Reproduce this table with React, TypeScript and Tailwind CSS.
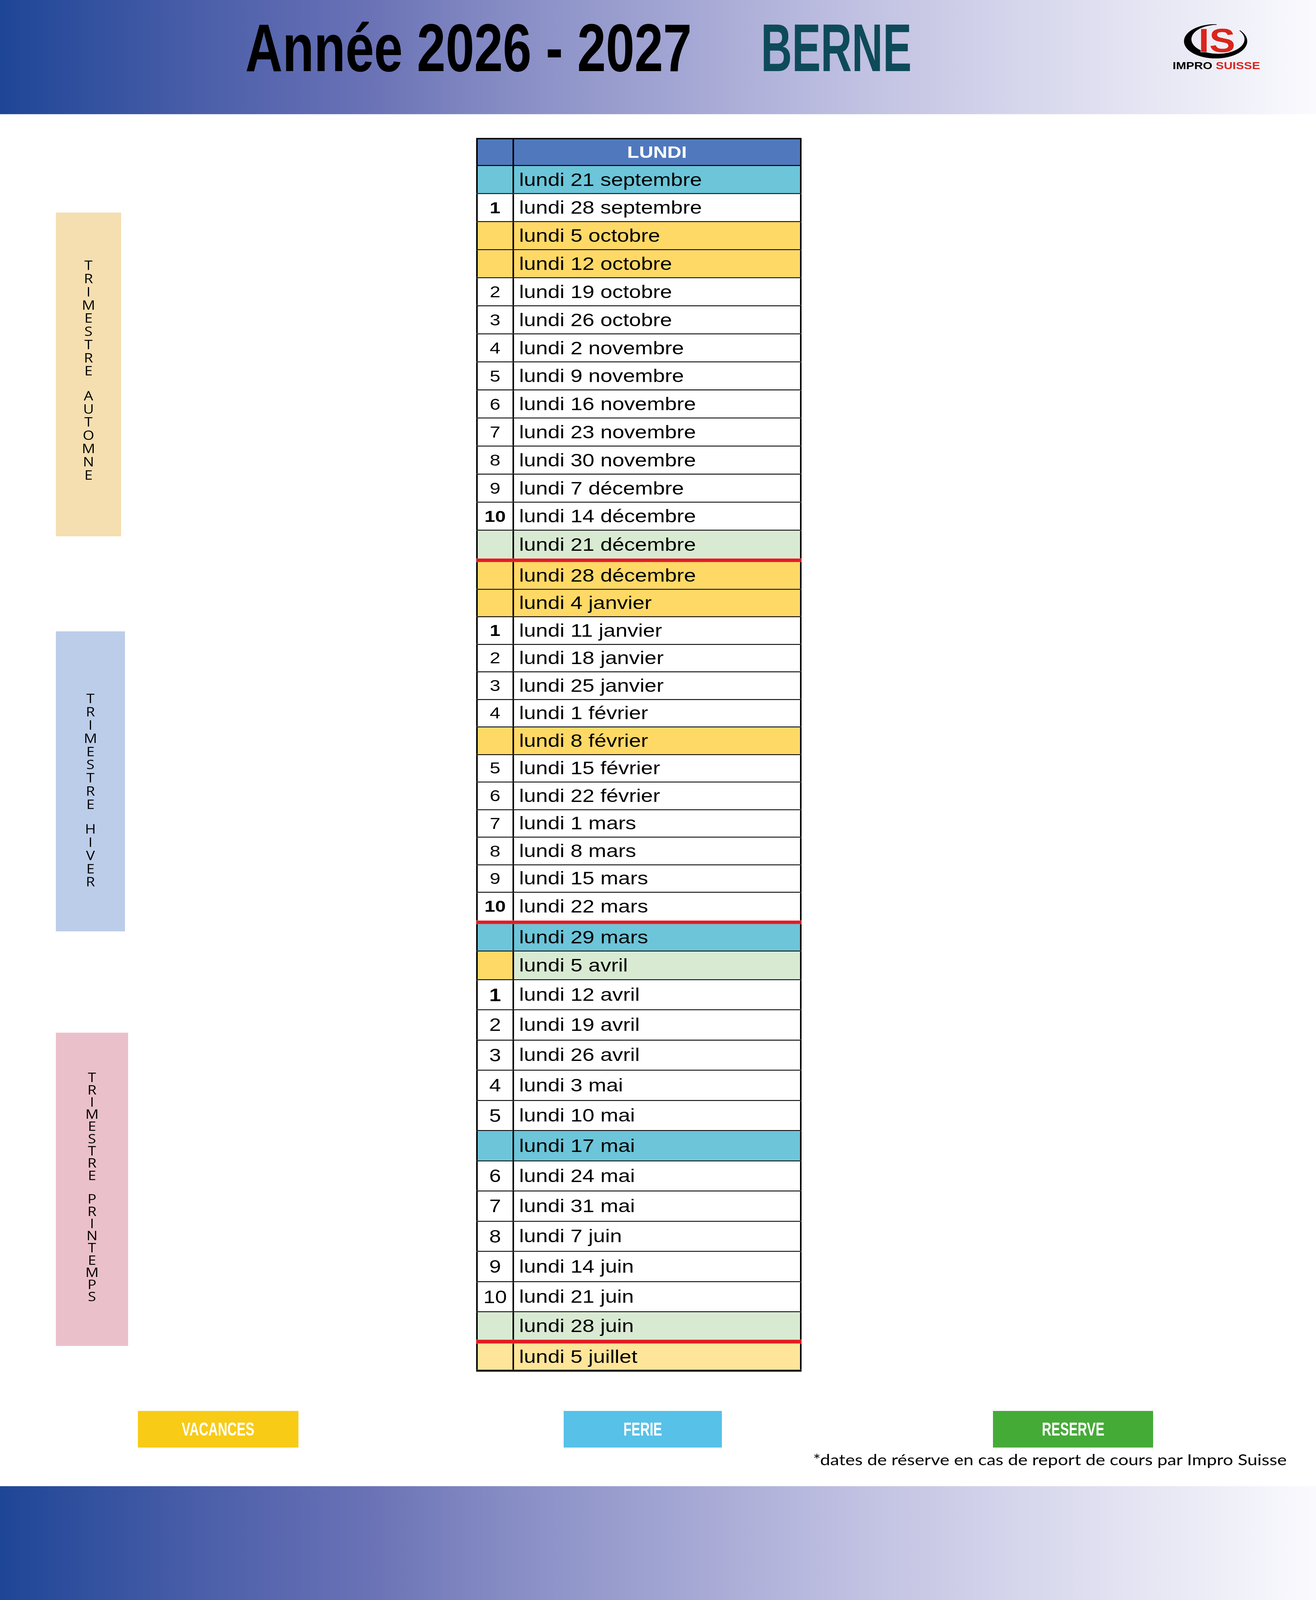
import React from 'react';

type Kind = 'plain' | 'ferie' | 'vac' | 'res' | 'mix' | 'july';

interface Row {
  n?: string;
  t?: string;
  kind?: Kind;
  h: string;
  bold?: boolean;
  big?: boolean;
  open?: boolean;
  red?: boolean;
}

const numBg: Record<Kind, string> = {
  plain: 'bg-white',
  ferie: 'bg-[#6cc5d9]',
  vac: 'bg-[#ffd966]',
  res: 'bg-[#d9ead3]',
  mix: 'bg-[#ffd966]',
  july: 'bg-[#ffe599]',
};

const dateBg: Record<Kind, string> = {
  plain: 'bg-white',
  ferie: 'bg-[#6cc5d9]',
  vac: 'bg-[#ffd966]',
  res: 'bg-[#d9ead3]',
  mix: 'bg-[#d9ead3]',
  july: 'bg-[#ffe599]',
};

const rows: Row[] = [
  // automne
  { t: 'lundi 21 septembre', kind: 'ferie', h: 'h-[85px]' },
  { n: '1', t: 'lundi 28 septembre', h: 'h-[85px]', bold: true },
  { t: 'lundi 5 octobre', kind: 'vac', h: 'h-[85px]' },
  { t: 'lundi 12 octobre', kind: 'vac', h: 'h-[85px]' },
  { n: '2', t: 'lundi 19 octobre', h: 'h-[85px]' },
  { n: '3', t: 'lundi 26 octobre', h: 'h-[85px]' },
  { n: '4', t: 'lundi 2 novembre', h: 'h-[85px]' },
  { n: '5', t: 'lundi 9 novembre', h: 'h-[85px]' },
  { n: '6', t: 'lundi 16 novembre', h: 'h-[85px]' },
  { n: '7', t: 'lundi 23 novembre', h: 'h-[85px]' },
  { n: '8', t: 'lundi 30 novembre', h: 'h-[85px]' },
  { n: '9', t: 'lundi 7 décembre', h: 'h-[85px]' },
  { n: '10', t: 'lundi 14 décembre', h: 'h-[85px]', bold: true },
  { t: 'lundi 21 décembre', kind: 'res', h: 'h-[84px]', open: true },
  { red: true, h: 'h-[11px]' },
  // hiver
  { t: 'lundi 28 décembre', kind: 'vac', h: 'h-[83.5px]' },
  { t: 'lundi 4 janvier', kind: 'vac', h: 'h-[83.5px]' },
  { n: '1', t: 'lundi 11 janvier', h: 'h-[83.5px]', bold: true },
  { n: '2', t: 'lundi 18 janvier', h: 'h-[83.5px]' },
  { n: '3', t: 'lundi 25 janvier', h: 'h-[83.5px]' },
  { n: '4', t: 'lundi 1 février', h: 'h-[83.5px]' },
  { t: 'lundi 8 février', kind: 'vac', h: 'h-[83.5px]' },
  { n: '5', t: 'lundi 15 février', h: 'h-[83.5px]' },
  { n: '6', t: 'lundi 22 février', h: 'h-[83.5px]' },
  { n: '7', t: 'lundi 1 mars', h: 'h-[83.5px]' },
  { n: '8', t: 'lundi 8 mars', h: 'h-[83.5px]' },
  { n: '9', t: 'lundi 15 mars', h: 'h-[83.5px]' },
  { n: '10', t: 'lundi 22 mars', h: 'h-[83.5px]', bold: true, open: true },
  { red: true, h: 'h-[11px]' },
  // printemps
  { t: 'lundi 29 mars', kind: 'ferie', h: 'h-[83px]' },
  { t: 'lundi 5 avril', kind: 'mix', h: 'h-[87px]' },
  { n: '1', t: 'lundi 12 avril', h: 'h-[91.5px]', bold: true, big: true },
  { n: '2', t: 'lundi 19 avril', h: 'h-[91.5px]', big: true },
  { n: '3', t: 'lundi 26 avril', h: 'h-[91.5px]', big: true },
  { n: '4', t: 'lundi 3 mai', h: 'h-[91.5px]', big: true },
  { n: '5', t: 'lundi 10 mai', h: 'h-[91.5px]', big: true },
  { t: 'lundi 17 mai', kind: 'ferie', h: 'h-[91.5px]' },
  { n: '6', t: 'lundi 24 mai', h: 'h-[91.5px]', big: true },
  { n: '7', t: 'lundi 31 mai', h: 'h-[91.5px]', big: true },
  { n: '8', t: 'lundi 7 juin', h: 'h-[91.5px]', big: true },
  { n: '9', t: 'lundi 14 juin', h: 'h-[91.5px]', big: true },
  { n: '10', t: 'lundi 21 juin', h: 'h-[91.5px]', big: true },
  { t: 'lundi 28 juin', kind: 'res', h: 'h-[83px]', open: true },
  { red: true, h: 'h-[12px]' },
  { t: 'lundi 5 juillet', kind: 'july', h: 'h-[82px]' },
];

const band =
  'bg-[linear-gradient(to_right,#1e4696_0%,#4a5ea9_15%,#6a72b6_28%,#8a90c6_40%,#a4a7d4_52%,#c0c0e2_65%,#dadaee_80%,#fafafe_100%)]';

function Logo() {
  return (
    <div className="relative ml-auto mr-[143px] mt-[30px] h-[142px] w-[224px] shrink-0">
      <svg viewBox="0 0 224 110" className="absolute left-0 top-0 h-[110px] w-[224px]">
        <defs>
          <mask id="swoosh-gap">
            <rect x="-10" y="-20" width="250" height="140" fill="white" />
            <polygon points="112,52 113,-20 240,-20 204,2" fill="black" />
          </mask>
        </defs>
        <path
          fillRule="evenodd"
          mask="url(#swoosh-gap)"
          fill="#000"
          d="M29,52 a81,52 0 1,0 162,0 a81,52 0 1,0 -162,0 Z M48,46 a68,44 0 1,0 136,0 a68,44 0 1,0 -136,0 Z"
        />
      </svg>
      <div className="absolute left-[66px] top-[-1px] whitespace-nowrap font-['Liberation_Sans',Arial,sans-serif] text-[100px] font-bold leading-none text-[#d9251d] [-webkit-text-stroke:2px_#ffffff] [paint-order:stroke_fill]">
        IS
      </div>
      <div className="absolute left-0 top-[111px] w-[224px] whitespace-nowrap text-center font-['Liberation_Sans',Arial,sans-serif] text-[31px] font-bold leading-none">
        <span className="text-black">IMPRO </span>
        <span className="text-[#d9251d]">SUISSE</span>
      </div>
    </div>
  );
}

// one word per block, one letter per line
function Trimestre({ words, box, lead, extra }: { words: string[]; box: string; lead: string; extra?: string }) {
  return (
    <div className={`flex flex-col items-center justify-center font-['Open_Sans',sans-serif] text-[38px] text-black ${box} ${extra ?? ''}`}>
      {words.map((w, wi) => (
        <div key={wi} className={`whitespace-pre-line text-center ${lead} ${wi > 0 ? 'mt-[35px]' : ''}`}>
          {w.split('').join('\n')}
        </div>
      ))}
    </div>
  );
}

function Table() {
  return (
    <div className="ml-[890px] mt-[72px] w-[833px] shrink-0 font-['Liberation_Sans',Arial,sans-serif] text-black">
      {/* En-tête */}
      <div className="flex h-[85px] border-b-[3px] border-t-4 border-black bg-[#5079bd]">
        <div className="w-[97px] border-l-4 border-r-4 border-black" />
        <div className="flex flex-1 items-center justify-center border-r-4 border-black text-[50px] font-bold text-white">
          LUNDI
        </div>
      </div>

      {rows.map((r, i) => {
        if (r.red) return <div key={i} className={`${r.h} w-full bg-[#e31b23]`} />;
        const kind = r.kind ?? 'plain';
        return (
          <div key={i} className={`flex ${r.h} ${r.open ? '' : 'border-b-[3px] border-black'}`}>
            <div
              className={`flex w-[97px] items-center justify-center border-l-4 border-r-4 border-black leading-none ${numBg[kind]} ${
                r.big ? 'text-[54px]' : 'text-[49px]'
              } ${r.bold ? 'font-bold' : ''}`}
            >
              {r.n}
            </div>
            <div className={`flex flex-1 items-center border-r-4 border-black pl-[13px] text-[55px] leading-none ${dateBg[kind]}`}>
              {r.t}
            </div>
          </div>
        );
      })}
      <div className="h-[3px] bg-black" />
    </div>
  );
}

function Legend({ label, color, extra }: { label: string; color: string; extra?: string }) {
  return (
    <div className={`flex h-[111px] items-center justify-center ${color} ${extra ?? ''}`}>
      <span className="inline-block scale-x-[0.6] whitespace-nowrap font-['Liberation_Sans',Arial,sans-serif] text-[56px] font-bold leading-none text-white">
        {label}
      </span>
    </div>
  );
}

export default function App() {
  return (
    <div className="h-[4096px] w-[3369px] overflow-hidden bg-white">
      <div className="flex h-[4848px] w-[3369px] origin-top-left scale-y-[0.8449] flex-col bg-white">
        {/* Bandeau haut */}
        <header className={`flex h-[346px] shrink-0 items-start pt-[43px] ${band}`}>
          <div className="ml-[628px] w-[1320px] shrink-0">
            <span className="inline-block origin-left scale-x-[0.646] whitespace-nowrap font-['Liberation_Sans',Arial,sans-serif] text-[204px] font-bold leading-none text-black">
              Année 2026 - 2027
            </span>
          </div>
          <div className="w-[420px] shrink-0">
            <span className="inline-block origin-left scale-x-[0.54] whitespace-nowrap font-['Liberation_Sans',Arial,sans-serif] text-[204px] font-bold leading-none text-[#0e4a59]">
              BERNE
            </span>
          </div>
          <Logo />
        </header>

        {/* Calendrier */}
        <div className="flex shrink-0 items-start pl-[143px]">
          <div className="flex w-[186px] shrink-0 flex-col pt-[298px]">
            <Trimestre
              words={['TRIMESTRE', 'AUTOMNE']}
              box="h-[981px] w-[167px] bg-[#f5dfb1]"
              lead="leading-[40px]"
              extra="pb-[28px]"
            />
            <Trimestre
              words={['TRIMESTRE', 'HIVER']}
              box="mt-[288px] h-[909px] w-[177px] bg-[#bccde9]"
              lead="leading-[40px]"
              extra="pt-[52px]"
            />
            <Trimestre
              words={['TRIMESTRE', 'PRINTEMPS']}
              box="mt-[307px] h-[949px] w-[185px] bg-[#eac0ca]"
              lead="leading-[37px]"
              extra="pb-[14px]"
            />
          </div>
          <Table />
        </div>

        {/* Légende */}
        <div className="mt-[119px] flex shrink-0 pl-[353px]">
          <Legend label="VACANCES" color="w-[411px] bg-[#f8cb16]" />
          <Legend label="FERIE" color="w-[405px] bg-[#57c1e8]" extra="ml-[679px]" />
          <Legend label="RESERVE" color="w-[410px] bg-[#45ab37]" extra="ml-[694px]" />
        </div>
        <div className="mt-[14px] flex shrink-0 justify-end pr-[75px]">
          <p className="font-['Lato',sans-serif] text-[46px] leading-none text-black">
            *dates de réserve en cas de report de cours par Impro Suisse
          </p>
        </div>

        {/* Bandeau bas */}
        <footer className={`mt-auto h-[345px] shrink-0 ${band}`} />
      </div>
    </div>
  );
}
